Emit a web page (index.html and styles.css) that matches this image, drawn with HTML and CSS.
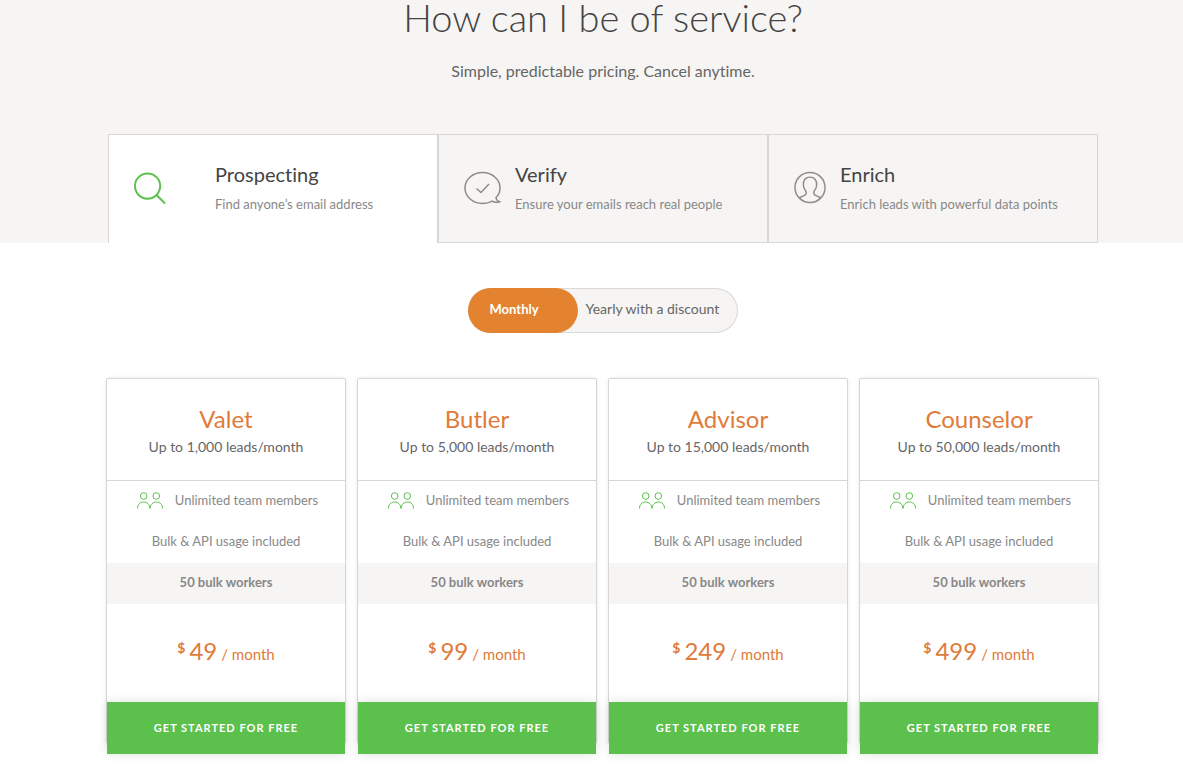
FILE: index.html
```
<!DOCTYPE html>
<html lang="en">
<head>
    <meta charset="UTF-8">
    <meta name="viewport" content="width=device-width, initial-scale=1.0">
    <title>Pricing</title>
    <link rel="stylesheet" href="styles.css">
</head>
<body>
    <svg class="sprite" aria-hidden="true">
        <symbol id="team" viewBox="0 0 26 17">
            <circle cx="6.7" cy="4" r="3.3"/>
            <circle cx="19.3" cy="4" r="3.3"/>
            <path d="M.5 16.500C.5 12.500 3 10 6.500 10s6.300 2.500 6.500 6.500C13.200 12.500 16 10 19.500 10s6 2.500 6 6.500"/>
        </symbol>
    </svg>

    <header class="hero">
        <h1>How can I be of service?</h1>
        <p class="subtitle">Simple, predictable pricing. Cancel anytime.</p>
        <div class="tabs">
            <button type="button" class="tab active">
                <svg class="tab-icon" width="32" height="33" viewBox="0 0 33 34">
                    <circle cx="14" cy="14.500" r="13"/>
                    <path d="M23 23.500L32 32.500"/>
                </svg>
                <span class="tab-text">
                    <span class="tab-title">Prospecting</span>
                    <span class="tab-desc">Find anyone’s email address</span>
                </span>
            </button>
            <button type="button" class="tab">
                <svg class="tab-icon" width="37" height="34" viewBox="0 0 37 34">
                    <path d="M32 26.500C34.700 24 36 20.800 36 17 36 8.200 28.200 1.500 18.500 1.500S1 8.200 1 17s7.800 15.500 17.500 15.500c3.800 0 7-.8 9.700-2.300 1.800 1.200 4.300 1.500 7.300.6-2-.7-3.300-2.300-3.500-4.300z"/>
                    <path d="M12.500 17.500l4.500 4 8-8.500"/>
                </svg>
                <span class="tab-text">
                    <span class="tab-title">Verify</span>
                    <span class="tab-desc">Ensure your emails reach real people</span>
                </span>
            </button>
            <button type="button" class="tab">
                <svg class="tab-icon" width="32" height="33" viewBox="0 0 33 34">
                    <circle cx="16.500" cy="17" r="15.500"/>
                    <path d="M5.500 28c1.500-1.800 5-2.200 6.500-3.800 1-1.200.6-3-.2-4.200-1.300-1.500-2.100-3.200-2.100-5.200C9.200 9.500 12 6.300 16.500 6.300s7.300 3.200 6.800 8.500c0 2-.8 3.700-2.100 5.200-.8 1.200-1.200 3-.2 4.200 1.500 1.600 5 2 6.500 3.800"/>
                </svg>
                <span class="tab-text">
                    <span class="tab-title">Enrich</span>
                    <span class="tab-desc">Enrich leads with powerful data points</span>
                </span>
            </button>
        </div>
    </header>

    <main class="pricing">
        <div class="toggle">
            <button type="button" class="active">Monthly</button>
            <button type="button">Yearly with a discount</button>
        </div>

        <div class="plans">
            <section class="plan">
                <div class="plan-head">
                    <h2>Valet</h2>
                    <p>Up to 1,000 leads/month</p>
                </div>
                <ul>
                    <li class="members"><svg class="team"><use href="#team"/></svg>Unlimited team members</li>
                    <li>Bulk &amp; API usage included</li>
                    <li class="workers">50 bulk workers</li>
                </ul>
                <p class="price"><sup>$</sup><span>49</span><small>/ month</small></p>
                <a href="#" class="cta">Get started for free</a>
            </section>
            <section class="plan">
                <div class="plan-head">
                    <h2>Butler</h2>
                    <p>Up to 5,000 leads/month</p>
                </div>
                <ul>
                    <li class="members"><svg class="team"><use href="#team"/></svg>Unlimited team members</li>
                    <li>Bulk &amp; API usage included</li>
                    <li class="workers">50 bulk workers</li>
                </ul>
                <p class="price"><sup>$</sup><span>99</span><small>/ month</small></p>
                <a href="#" class="cta">Get started for free</a>
            </section>
            <section class="plan">
                <div class="plan-head">
                    <h2>Advisor</h2>
                    <p>Up to 15,000 leads/month</p>
                </div>
                <ul>
                    <li class="members"><svg class="team"><use href="#team"/></svg>Unlimited team members</li>
                    <li>Bulk &amp; API usage included</li>
                    <li class="workers">50 bulk workers</li>
                </ul>
                <p class="price"><sup>$</sup><span>249</span><small>/ month</small></p>
                <a href="#" class="cta">Get started for free</a>
            </section>
            <section class="plan">
                <div class="plan-head">
                    <h2>Counselor</h2>
                    <p>Up to 50,000 leads/month</p>
                </div>
                <ul>
                    <li class="members"><svg class="team"><use href="#team"/></svg>Unlimited team members</li>
                    <li>Bulk &amp; API usage included</li>
                    <li class="workers">50 bulk workers</li>
                </ul>
                <p class="price"><sup>$</sup><span>499</span><small>/ month</small></p>
                <a href="#" class="cta">Get started for free</a>
            </section>
        </div>
    </main>
</body>
</html>
```
FILE: styles.css
```
* {
    box-sizing: border-box;
}
body {
    margin: 0;
    font-family: Lato, "Open Sans", sans-serif;
    color: #666;
    background: #fff;
}
h1, h2, p, ul {
    margin: 0;
    padding: 0;
    font-weight: 400;
}
button {
    font-family: inherit;
    font-variant-ligatures: none;
    color: inherit;
    cursor: pointer;
}
svg {
    fill: none;
    flex: none;
}
.sprite {
    position: absolute;
    width: 0;
    height: 0;
}
.hero {
    padding-left: 23px;
    background: #f6f5f3;
    text-align: center;
}
.hero h1 {
    font-size: 38px;
    line-height: 34px;
    font-weight: 300;
    color: #444;
}
.subtitle {
    padding: 25px 0 51px;
    font-size: 16px;
    line-height: 24px;
    font-variant-ligatures: none;
}
.tabs {
    display: grid;
    grid-template-columns: repeat(3, 1fr);
    max-width: 990px;
    margin: 0 auto;
}
.tab {
    display: flex;
    align-items: center;
    gap: 14px;
    height: 109px;
    padding: 0 25px 2px;
    border: 1px solid #d6d6d6;
    background: #f6f5f3;
    text-align: left;
}
.tab.active {
    gap: 49px;
    border-bottom: 0;
    background: #fff;
}
.tab-icon {
    stroke: #8c8c8c;
    stroke-width: 1.5;
}
.tab.active .tab-icon {
    stroke: #5cc04d;
    stroke-width: 2;
}
.tab-text {
    padding-top: 2px;
}
.tab-title {
    display: block;
    font-size: 20px;
    line-height: 30px;
    color: #444;
}
.tab-desc {
    display: block;
    font-size: 13px;
    line-height: 30px;
    color: #888;
}
.pricing {
    padding: 45px 0 27px 22px;
}
.toggle {
    display: flex;
    width: 270px;
    height: 45px;
    margin: 0 auto 45px;
    border-radius: 23px;
    background: #f6f5f3;
    box-shadow: inset 0 0 0 1px #d9d9d9;
}
.toggle button {
    padding: 0 8px 4px;
    border: 0;
    border-radius: 23px;
    background: none;
    font-size: 14px;
    text-align: left;
}
.toggle .active {
    width: 110px;
    padding: 0 22px 4px;
    background: #e38330;
    font-size: 13px;
    font-weight: 700;
    color: #fff;
}
.plans {
    display: grid;
    grid-template-columns: repeat(4, 1fr);
    gap: 11px;
    max-width: 993px;
    margin: 0 auto;
}
.plan {
    height: 366px;
    border: 1px solid #d6d6d6;
    border-radius: 2px;
    box-shadow: 0 0 4px rgba(0, 0, 0, 0.08);
    text-align: center;
}
.plan-head {
    height: 102px;
    padding-top: 24px;
    border-bottom: 1px solid #d6d6d6;
    font-size: 14px;
    line-height: 24px;
}
.plan-head h2 {
    font-size: 24px;
    line-height: 32px;
    color: #e07b39;
}
.plan ul {
    list-style: none;
    font-size: 13px;
    color: #888;
}
.plan li {
    display: flex;
    align-items: center;
    justify-content: center;
    gap: 12px;
    height: 41px;
    padding-bottom: 3px;
}
.plan .members {
    padding-left: 3px;
}
.team {
    width: 26px;
    height: 17px;
    stroke: #5cc04d;
}
.plan .workers {
    background: #f6f5f3;
    font-weight: 700;
}
.price {
    display: flex;
    align-items: baseline;
    justify-content: center;
    gap: 4px;
    height: 98px;
    font-size: 24px;
    line-height: 94px;
    color: #e07b39;
}
.price sup {
    font-size: 14px;
    line-height: 88px;
    font-weight: 700;
    align-self: flex-start;
}
.price small {
    font-size: 15px;
}
.cta {
    display: block;
    background: #5cc04d;
    box-shadow: 0 0 10px rgba(0, 0, 0, 0.12);
    font-size: 11px;
    line-height: 52px;
    font-weight: 700;
    letter-spacing: 1px;
    text-transform: uppercase;
    text-decoration: none;
    color: #fff;
}
```
